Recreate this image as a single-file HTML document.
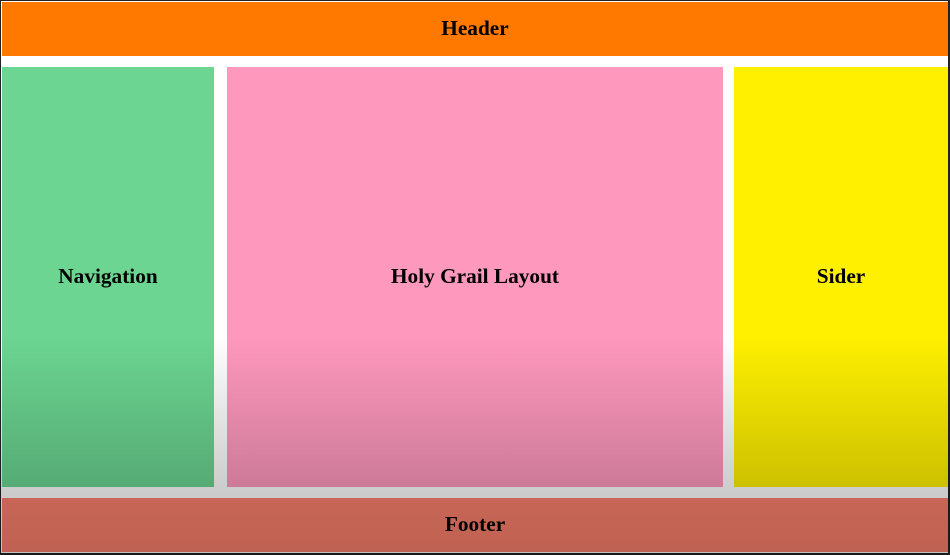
<!DOCTYPE html><html><head><style>
body{margin:0;width:950px;height:555px;background:#222;position:relative;overflow:hidden;font-family:"Liberation Serif",serif;font-weight:bold;font-size:21.3px}
.b{position:absolute;display:flex;align-items:center;justify-content:center;color:#000;box-sizing:border-box;padding-bottom:2px;white-space:nowrap}
#in{position:absolute;left:1px;top:1px;width:947px;height:552px;background:#fff}
#ov{position:absolute;left:0;top:335px;width:950px;height:220px;background:linear-gradient(rgba(0,0,0,0),rgba(0,0,0,0.2) 70%,rgba(0,0,0,0.24));pointer-events:none}
</style></head><body>
<div id="in"></div>
<div class="b" style="left:2px;top:2px;width:946px;height:54px;background:#ff7900">Header</div>
<div class="b" style="left:2px;top:67px;width:212px;height:420px;background:#6bd591">Navigation</div>
<div class="b" style="left:227px;top:67px;width:496px;height:420px;background:#ff98bd">Holy Grail Layout</div>
<div class="b" style="left:734px;top:67px;width:214px;height:420px;background:#fff000">Sider</div>
<div class="b" style="left:2px;top:498px;width:946px;height:54px;background:#fb806c">Footer</div>
<div id="ov"></div>
</body></html>
